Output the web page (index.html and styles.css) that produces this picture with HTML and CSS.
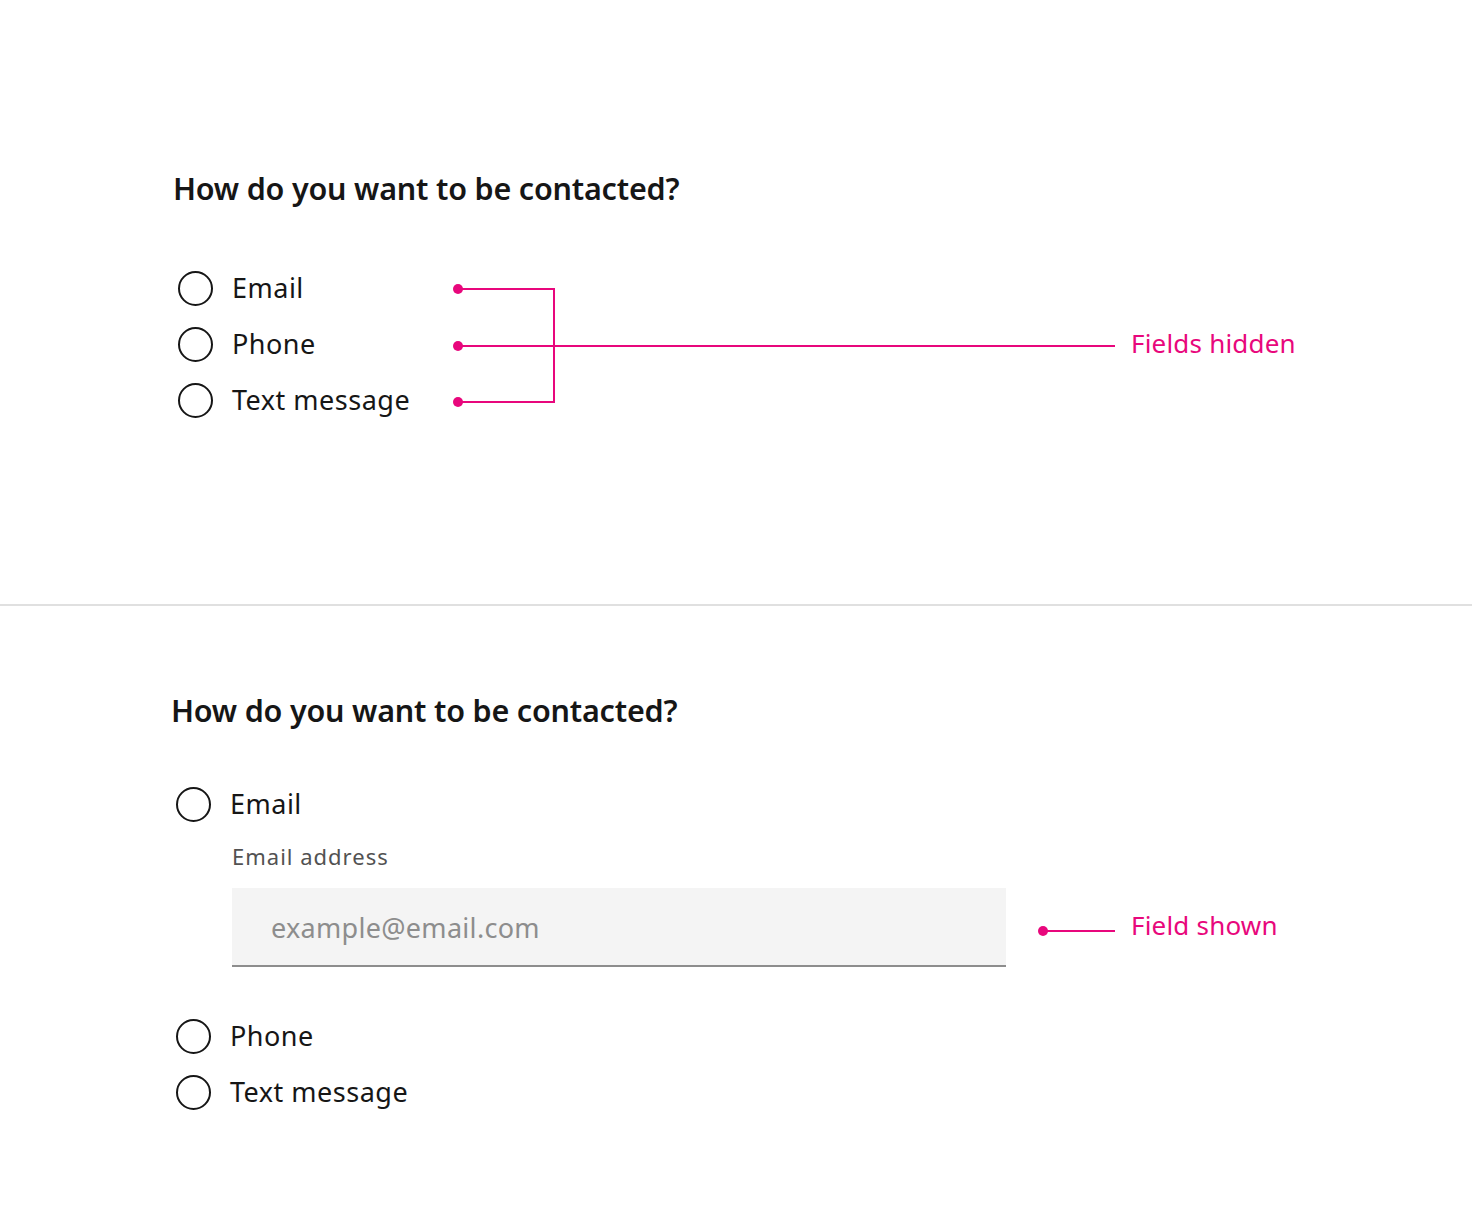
FILE: index.html
```html
<!DOCTYPE html>
<html lang="en">
<head>
<meta charset="utf-8">
<title>Radio with conditional field</title>
<link rel="stylesheet" href="styles.css">
</head>
<body>
<section class="panel panel-top">
  <h2 class="question">How do you want to be contacted?</h2>
  <div class="options">
    <label class="radio"><span class="circle"></span><span class="label">Email</span></label>
    <label class="radio"><span class="circle"></span><span class="label">Phone</span></label>
    <label class="radio"><span class="circle"></span><span class="label">Text message</span></label>
  </div>
  <div class="anno anno-hidden">
    <span class="dot d1"></span><span class="dot d2"></span><span class="dot d3"></span>
    <span class="hline h1"></span><span class="hline h3"></span>
    <span class="vline"></span>
    <span class="hline hmain"></span>
    <span class="anno-text t-hidden">Fields hidden</span>
  </div>
</section>
<hr class="divider">
<section class="panel panel-bottom">
  <h2 class="question">How do you want to be contacted?</h2>
  <div class="options">
    <label class="radio"><span class="circle"></span><span class="label">Email</span></label>
    <div class="field">
      <div class="field-label">Email address</div>
      <div class="input">example@email.com</div>
    </div>
    <label class="radio"><span class="circle"></span><span class="label">Phone</span></label>
    <label class="radio"><span class="circle"></span><span class="label">Text message</span></label>
  </div>
  <div class="anno anno-shown">
    <span class="dot ds"></span>
    <span class="hline hs"></span>
    <span class="anno-text t-shown">Field shown</span>
  </div>
</section>
</body>
</html>
```
FILE: styles.css
```css
* { box-sizing: border-box; }
html, body { margin: 0; padding: 0; background: #fff; }
body {
  width: 1472px;
  font-family: "Noto Sans", "Liberation Sans", sans-serif;
  color: #161616;
}
.panel { position: relative; }
.panel-top { height: 604px; padding: 168px 0 0 173px; }
.panel-bottom { height: 604px; padding: 84px 0 0 171px; }
.question {
  margin: 0;
  font-size: 30.5px;
  font-weight: 600;
  line-height: 40px;
  color: #161616;
  letter-spacing: -0.2px;
}
.options { margin-top: 52px; display: flex; flex-direction: column; }
.panel-bottom .options { margin-top: 46px; }
.radio { display: flex; align-items: center; height: 56px; }
.circle {
  width: 35px; height: 35px;
  border: 2px solid #161616;
  border-radius: 50%;
  margin-left: 5px;
  flex: none;
}
.label { margin-left: 19px; font-size: 27px; line-height: 34px; letter-spacing: 0.5px; }
.field { margin-left: 61px; padding-top: 10px; padding-bottom: 41px; }
.field-label { font-size: 22px; line-height: 28px; color: #525252; letter-spacing: 1px; }
.input {
  margin-top: 18px;
  width: 774px; height: 79px;
  background: #f4f4f4;
  border-bottom: 2px solid #8d8d8d;
  padding-left: 39px;
  font-size: 27px; line-height: 79px;
  color: #8d8d8d;
  letter-spacing: 0.3px;
}
.divider { margin: 0; border: 0; height: 2px; background: #e0e0e0; }

.anno { position: absolute; inset: 0; pointer-events: none; }
.dot { position: absolute; width: 10px; height: 10px; border-radius: 50%; background: #e8077c; }
.hline { position: absolute; height: 2px; background: #e8077c; }
.vline { position: absolute; width: 2px; background: #e8077c; }
.d1 { left: 453px; top: 284px; }
.d2 { left: 453px; top: 341px; }
.d3 { left: 453px; top: 397px; }
.h1 { left: 458px; top: 288px; width: 97px; }
.h3 { left: 458px; top: 401px; width: 97px; }
.vline { left: 553px; top: 288px; height: 115px; }
.hmain { left: 458px; top: 345px; width: 657px; }
.anno-text { position: absolute; font-size: 26px; line-height: 34px; color: #e8077c; letter-spacing: 0.2px; }
.t-hidden { left: 1131px; top: 326px; }
.ds { left: 1038px; top: 320px; }
.hs { left: 1043px; top: 324px; width: 72px; }
.t-shown { left: 1131px; top: 302px; }
```
